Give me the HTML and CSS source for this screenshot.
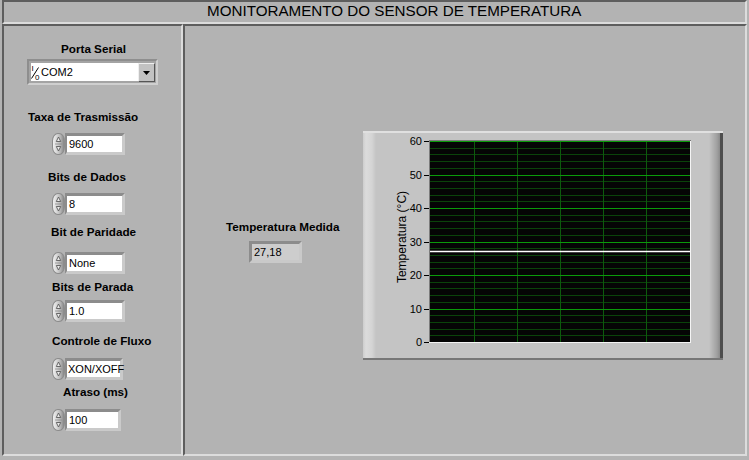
FILE: index.html
```html
<!DOCTYPE html>
<html lang="pt">
<head>
<meta charset="utf-8">
<title>Monitoramento do Sensor de Temperatura</title>
<link rel="stylesheet" href="styles.css">
</head>
<body>
<div class="app">
  <header class="titlebar">
    <h1 class="title">MONITORAMENTO DO SENSOR DE TEMPERATURA</h1>
  </header>
  <main class="panels">
    <section class="panel panel--config">
      <div class="label label--porta">Porta Serial</div>
      <div class="ring">
        <div class="ring__field">
          <svg class="ring__io" width="9" height="18" viewBox="0 0 9 18">
            <text x="0.5" y="7.5" class="io-text">I</text>
            <line x1="0.5" y1="15.5" x2="7.5" y2="4.5" stroke="#000" stroke-width="1"/>
            <text x="4" y="16.5" class="io-text">0</text>
          </svg>
          <span class="ring__value">COM2</span>
        </div>
        <div class="ring__btn">
          <svg width="15" height="17" viewBox="0 0 15 17"><path d="M4 7h7l-3.5 4z" fill="#000"/></svg>
        </div>
      </div>

      <div class="label label--taxa">Taxa de Trasmissão</div>
      <div class="num num--taxa">
        <span class="spin"><svg width="13" height="22" viewBox="0 0 13 22"><path d="M6.5 4L4.3 8.5h4.4z" fill="#ececec" stroke="#5a5a5a" stroke-width="0.9"/><path d="M3 11h7" stroke="#8a8a8a" stroke-width="0.8"/><path d="M4.3 13.5h4.4l-2.2 4.5z" fill="#ececec" stroke="#5a5a5a" stroke-width="0.9"/></svg></span>
        <span class="num__field">9600</span>
      </div>

      <div class="label label--dados">Bits de Dados</div>
      <div class="num num--dados">
        <span class="spin"><svg width="13" height="22" viewBox="0 0 13 22"><path d="M6.5 4L4.3 8.5h4.4z" fill="#ececec" stroke="#5a5a5a" stroke-width="0.9"/><path d="M3 11h7" stroke="#8a8a8a" stroke-width="0.8"/><path d="M4.3 13.5h4.4l-2.2 4.5z" fill="#ececec" stroke="#5a5a5a" stroke-width="0.9"/></svg></span>
        <span class="num__field">8</span>
      </div>

      <div class="label label--paridade">Bit de Paridade</div>
      <div class="num num--paridade">
        <span class="spin"><svg width="13" height="22" viewBox="0 0 13 22"><path d="M6.5 4L4.3 8.5h4.4z" fill="#ececec" stroke="#5a5a5a" stroke-width="0.9"/><path d="M3 11h7" stroke="#8a8a8a" stroke-width="0.8"/><path d="M4.3 13.5h4.4l-2.2 4.5z" fill="#ececec" stroke="#5a5a5a" stroke-width="0.9"/></svg></span>
        <span class="num__field">None</span>
      </div>

      <div class="label label--parada">Bits de Parada</div>
      <div class="num num--parada">
        <span class="spin"><svg width="13" height="22" viewBox="0 0 13 22"><path d="M6.5 4L4.3 8.5h4.4z" fill="#ececec" stroke="#5a5a5a" stroke-width="0.9"/><path d="M3 11h7" stroke="#8a8a8a" stroke-width="0.8"/><path d="M4.3 13.5h4.4l-2.2 4.5z" fill="#ececec" stroke="#5a5a5a" stroke-width="0.9"/></svg></span>
        <span class="num__field">1.0</span>
      </div>

      <div class="label label--fluxo">Controle de Fluxo</div>
      <div class="num num--fluxo">
        <span class="spin"><svg width="13" height="22" viewBox="0 0 13 22"><path d="M6.5 4L4.3 8.5h4.4z" fill="#ececec" stroke="#5a5a5a" stroke-width="0.9"/><path d="M3 11h7" stroke="#8a8a8a" stroke-width="0.8"/><path d="M4.3 13.5h4.4l-2.2 4.5z" fill="#ececec" stroke="#5a5a5a" stroke-width="0.9"/></svg></span>
        <span class="num__field num__field--xon">XON/XOFF</span>
      </div>

      <div class="label label--atraso">Atraso (ms)</div>
      <div class="num num--atraso">
        <span class="spin"><svg width="13" height="22" viewBox="0 0 13 22"><path d="M6.5 4L4.3 8.5h4.4z" fill="#ececec" stroke="#5a5a5a" stroke-width="0.9"/><path d="M3 11h7" stroke="#8a8a8a" stroke-width="0.8"/><path d="M4.3 13.5h4.4l-2.2 4.5z" fill="#ececec" stroke="#5a5a5a" stroke-width="0.9"/></svg></span>
        <span class="num__field num__field--atraso">100</span>
      </div>
    </section>

    <section class="panel panel--display">
      <div class="readout">
        <div class="label">Temperatura Medida</div>
        <div class="indicator">27,18</div>
      </div>

      <div class="chart">
        <svg class="chart__svg" width="360" height="225" viewBox="0 0 360 225">
          <rect x="67" y="8" width="260" height="201" fill="#050505"/>
          <path class="grid-minor" d="M67 202.5H327M67 196.5H327M67 189.5H327M67 182.5H327M67 169.5H327M67 162.5H327M67 155.5H327M67 149.5H327M67 135.5H327M67 129.5H327M67 122.5H327M67 115.5H327M67 102.5H327M67 95.5H327M67 88.5H327M67 82.5H327M67 68.5H327M67 62.5H327M67 55.5H327M67 48.5H327M67 35.5H327M67 28.5H327M67 21.5H327M67 15.5H327"/>
          <path class="grid-vert" d="M111.5 8V209M154.5 8V209M197.5 8V209M240.5 8V209M283.5 8V209"/>
          <path class="grid-major" d="M67 176.5H327M67 142.5H327M67 109.5H327M67 75.5H327M67 42.5H327M67 8.5H327"/>
          <path d="M67 118.5H327" stroke="#ffffff" stroke-width="1.3"/>
          <path d="M66 7.5H328M66.5 7V210" stroke="#7c7c7c" stroke-width="1"/>
          <path d="M327.5 8V210M66 209.5H328" stroke="#f4f4f4" stroke-width="1"/>
          <path class="ticks" d="M61 209.5H66M61 176.5H66M61 142.5H66M61 109.5H66M61 75.5H66M61 42.5H66M61 8.5H66"/>
          <g class="tick-labels">
            <text x="59" y="213">0</text>
            <text x="59" y="180">10</text>
            <text x="59" y="146">20</text>
            <text x="59" y="113">30</text>
            <text x="59" y="79">40</text>
            <text x="59" y="46">50</text>
            <text x="59" y="12">60</text>
          </g>
          <text class="axis-title" transform="translate(43 104) rotate(-90)">Temperatura (°C)</text>
        </svg>
      </div>
    </section>
  </main>
</div>
</body>
</html>
```

FILE: styles.css
```css
html, body {
  margin: 0;
  padding: 0;
}

body {
  width: 749px;
  height: 460px;
  overflow: hidden;
  background: #b3b3b3;
  font-family: "Liberation Sans", Arial, sans-serif;
  color: #000;
}

.app {
  padding: 0 2px;
}

.titlebar {
  box-sizing: border-box;
  height: 24px;
  border-style: solid;
  border-width: 2px 2px 2px 2px;
  border-color: #5e5e5e #dcdcdc #dcdcdc #5e5e5e;
}

.title {
  margin: 0;
  padding-left: 203px;
  font-weight: normal;
  font-size: 15.2px;
  line-height: 18px;
  white-space: nowrap;
}

.panels {
  display: flex;
  height: 432px;
}

.panel {
  box-sizing: border-box;
  border-style: solid;
  border-width: 2px;
  border-color: #5e5e5e #dcdcdc #dcdcdc #5e5e5e;
}

.panel--config {
  width: 181px;
  display: flex;
  flex-direction: column;
  align-items: flex-start;
}

.panel--display {
  flex: 1;
  display: flex;
  align-items: flex-start;
}

.label {
  font-weight: bold;
  font-size: 11.7px;
  line-height: 13px;
  white-space: nowrap;
}

.label--porta { margin-top: 16px; padding-left: 57px; }
.label--taxa { margin-top: 25px; padding-left: 24px; }
.label--dados { margin-top: 15px; padding-left: 44px; }
.label--paridade { margin-top: 10px; padding-left: 47px; }
.label--parada { margin-top: 6px; padding-left: 48px; }
.label--fluxo { margin-top: 12px; padding-left: 48px; }
.label--atraso { margin-top: 5px; padding-left: 59px; }

/* ring (dropdown) */
.ring {
  box-sizing: border-box;
  display: flex;
  width: 131px;
  height: 26px;
  margin: 4px 0 0 23px;
  padding: 2px 1px 2px 2px;
  border-style: solid;
  border-width: 2px;
  border-color: #8e8e8e #cfcfcf #cfcfcf #8e8e8e;
  background: #a4a4a4;
}

.ring__field {
  flex: 1;
  display: flex;
  align-items: center;
  background: #fff;
  height: 18px;
}

.ring__io {
  display: block;
  flex: none;
}

.io-text {
  font-family: "Liberation Sans", Arial, sans-serif;
  font-size: 8px;
}

.ring__value {
  padding-left: 1px;
  font-size: 11px;
  line-height: 18px;
}

.ring__btn {
  box-sizing: border-box;
  width: 17px;
  height: 19px;
  border-style: solid;
  border-width: 1px;
  border-color: #efefef #555 #555 #efefef;
  background: #c2c2c2;
}

.ring__btn svg {
  display: block;
}

/* numeric controls */
.num {
  display: flex;
  height: 22px;
  margin-left: 48px;
}

.num--taxa { margin-top: 10px; }
.num--dados { margin-top: 10px; }
.num--paridade { margin-top: 14px; }
.num--parada { margin-top: 7px; }
.num--fluxo { margin-top: 11px; }
.num--atraso { margin-top: 11px; }

.spin {
  display: block;
  box-sizing: border-box;
  width: 13px;
  height: 22px;
  border-radius: 6px / 8px;
  border: 1px solid #8c8c8c;
  background: linear-gradient(to right, #f0f0f0 0%, #d6d6d6 35%, #b2b2b2 70%, #868686 100%);
}

.spin svg {
  display: block;
  margin: -1px 0 0 -1px;
}

.num__field {
  box-sizing: border-box;
  width: 60px;
  height: 22px;
  padding-left: 2px;
  border-style: solid;
  border-width: 3px 3px 3px 2px;
  border-color: #8c8c8c #cacaca #cacaca #8c8c8c;
  background: #fff;
  font-size: 11px;
  line-height: 16px;
  white-space: nowrap;
}

.num__field--xon { width: 58px; padding-left: 1px; }
.num__field--atraso { width: 56px; }

/* readout */
.readout {
  width: 137px;
  margin: 194px 0 0 41px;
}

.indicator {
  box-sizing: border-box;
  width: 53px;
  height: 22px;
  margin: 8px 0 0 23px;
  padding-left: 2px;
  border-style: solid;
  border-width: 3px;
  border-color: #8c8c8c #c9c9c9 #c9c9c9 #8c8c8c;
  background: #cdcdcd;
  font-size: 11px;
  line-height: 16px;
}

/* chart */
.chart {
  box-sizing: border-box;
  width: 360px;
  height: 229px;
  margin-top: 105px;
  border-top: 2px solid #e0e0e0;
  border-bottom: 2px solid #777;
  background: linear-gradient(to right,
    #cdcdcd 0px, #dcdcdc 3px, #d4d4d4 9px, #c4c4c4 13px,
    #c4c4c4 calc(100% - 14px), #a0a0a0 calc(100% - 6px),
    #8a8a8a calc(100% - 3px), #4e4e4e calc(100% - 3px), #4e4e4e 100%);
}

.chart__svg {
  display: block;
}

.grid-minor {
  stroke: #0a430a;
  stroke-width: 1;
  fill: none;
}

.grid-vert {
  stroke: #0d5a0d;
  stroke-width: 1;
  fill: none;
}

.grid-major {
  stroke: #0a9a0a;
  stroke-width: 1;
  fill: none;
}

.ticks {
  stroke: #000;
  stroke-width: 1;
}

.tick-labels text {
  font-family: "Liberation Sans", Arial, sans-serif;
  font-size: 11px;
  text-anchor: end;
  fill: #000;
}

.axis-title {
  font-family: "Liberation Sans", Arial, sans-serif;
  font-size: 12px;
  text-anchor: middle;
  fill: #000;
}
```
